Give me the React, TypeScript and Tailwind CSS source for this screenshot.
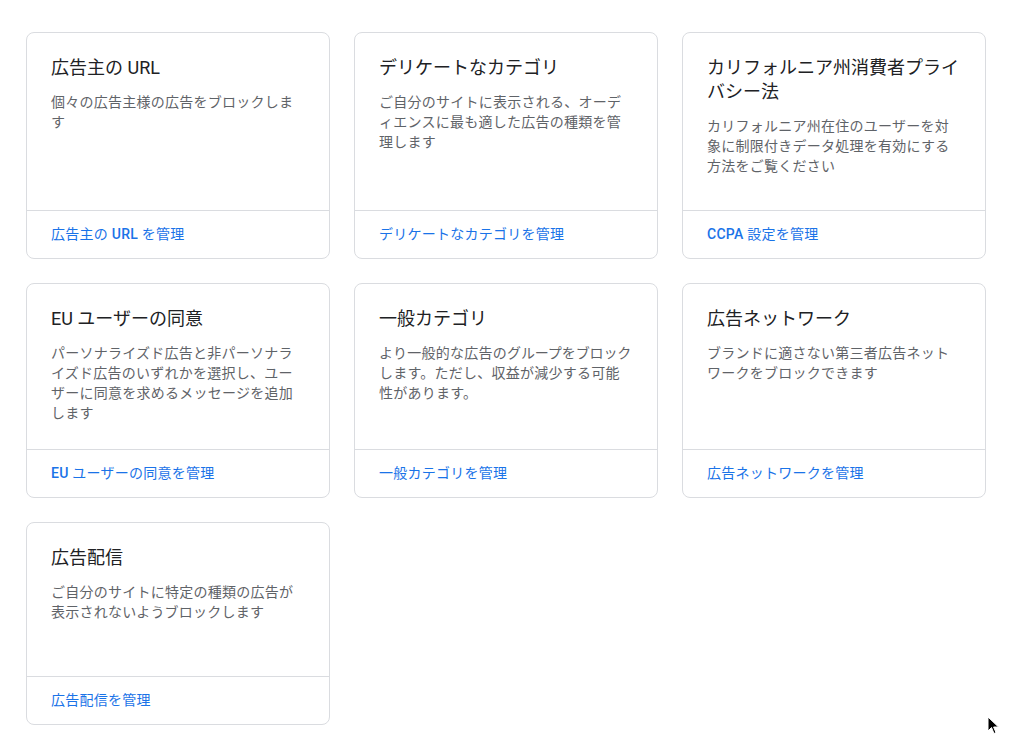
import React from "react";

type Card = {
  title: string;
  desc: React.ReactNode;
  link: string;
};

const cards: Card[] = [
  {
    title: "広告主の URL",
    desc: "個々の広告主様の広告をブロックします",
    link: "広告主の URL を管理",
  },
  {
    title: "デリケートなカテゴリ",
    desc: "ご自分のサイトに表示される、オーディエンスに最も適した広告の種類を管理します",
    link: "デリケートなカテゴリを管理",
  },
  {
    title: "カリフォルニア州消費者プライバシー法",
    desc: "カリフォルニア州在住のユーザーを対象に制限付きデータ処理を有効にする方法をご覧ください",
    link: "CCPA 設定を管理",
  },
  {
    title: "EU ユーザーの同意",
    desc: "パーソナライズド広告と非パーソナライズド広告のいずれかを選択し、ユーザーに同意を求めるメッセージを追加します",
    link: "EU ユーザーの同意を管理",
  },
  {
    title: "一般カテゴリ",
    desc: (
      <>
        より一般的な広告の<span className="tracking-[-0.1px]">グループをブロック</span>
        します。ただし、収益が減少する可能性があります。
      </>
    ),
    link: "一般カテゴリを管理",
  },
  {
    title: "広告ネットワーク",
    desc: "ブランドに適さない第三者広告ネットワークをブロックできます",
    link: "広告ネットワークを管理",
  },
  {
    title: "広告配信",
    desc: "ご自分のサイトに特定の種類の広告が表示されないようブロックします",
    link: "広告配信を管理",
  },
];

// latin words in the links are medium weight, the kana/kanji stay regular
function LinkText({ text }: { text: string }) {
  return (
    <>
      {text.split(/([A-Za-z]+)/).map((part, i) =>
        /^[A-Za-z]+$/.test(part) ? (
          <span key={i} className="font-medium">
            {part}
          </span>
        ) : (
          <span key={i}>{part}</span>
        )
      )}
    </>
  );
}

export default function App() {
  return (
    <main
      className="relative min-h-[750px] bg-white"
      style={{ fontFamily: 'Roboto, "Noto Sans CJK JP", sans-serif' }}
    >
      <div className="pl-[26px] pt-[32px]">
        <div className="grid grid-cols-[304px_304px_304px] grid-rows-[227px_215px_203px] gap-6">
          {cards.map((card) => (
            <div
              key={card.title}
              className="flex flex-col rounded-lg border border-[#dadce0] bg-white"
            >
              <div className="flex-1 px-6 pt-6">
                <h2 className="-mt-px text-[18px] leading-6 text-[#202124]">
                  {card.title}
                </h2>
                <p className="mt-3 text-[14px] leading-5 tracking-[0.25px] text-[#5f6368]">
                  {card.desc}
                </p>
              </div>

              <div className="flex h-12 items-center border-t border-[#dadce0] px-6 pb-0.5">
                <a
                  href="#"
                  className="text-[14px] font-normal leading-5 tracking-[0.25px] text-[#1a73e8]"
                >
                  <LinkText text={card.link} />
                </a>
              </div>
            </div>
          ))}
        </div>
      </div>

      {/* mouse pointer */}
      <svg
        className="absolute left-[987px] top-[716px]"
        width="14"
        height="20"
        viewBox="0 0 14 20"
      >
        <path
          d="M1 1 L1 15 L4.5 11.5 L7 17.5 L9 16.6 L6.6 11 L11.5 11 Z"
          fill="#000"
          stroke="#fff"
          strokeWidth="1"
        />
      </svg>
    </main>
  );
}
